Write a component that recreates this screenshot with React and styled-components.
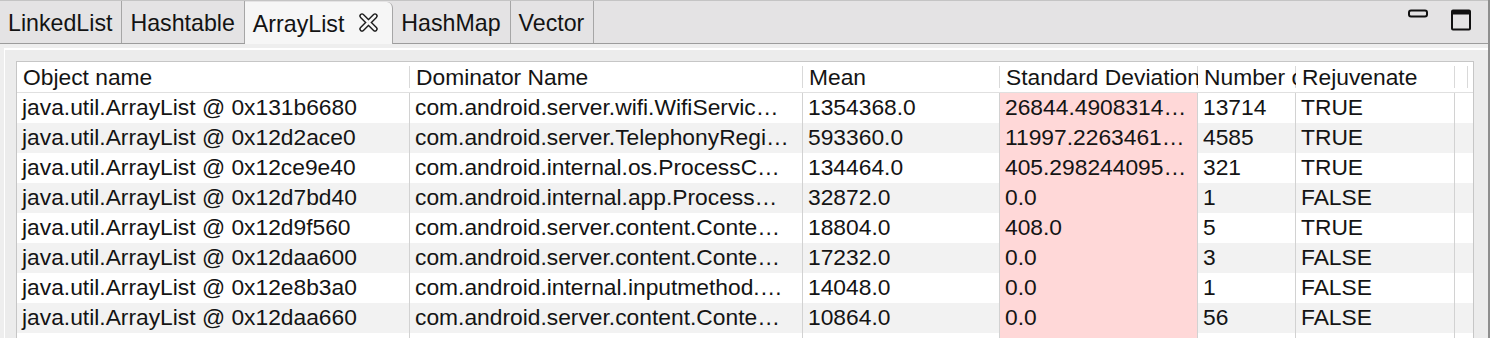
import React from "react"
import styled, { createGlobalStyle } from "styled-components"

const tabs = ["LinkedList", "Hashtable", "ArrayList", "HashMap", "Vector"]

const columns = [
  { title: "Object name", width: 393 },
  { title: "Dominator Name", width: 393 },
  { title: "Mean", width: 197 },
  { title: "Standard Deviation", width: 198, pink: true },
  { title: "Number of Objects", width: 98 },
  { title: "Rejuvenate", width: 159 },
  { title: "", width: 18 },
]

const rows = [
  ["java.util.ArrayList @ 0x131b6680", "com.android.server.wifi.WifiServic…", "1354368.0", "26844.4908314…", "13714", "TRUE"],
  ["java.util.ArrayList @ 0x12d2ace0", "com.android.server.TelephonyRegi…", "593360.0", "11997.2263461…", "4585", "TRUE"],
  ["java.util.ArrayList @ 0x12ce9e40", "com.android.internal.os.ProcessC…", "134464.0", "405.298244095…", "321", "TRUE"],
  ["java.util.ArrayList @ 0x12d7bd40", "com.android.internal.app.Process…", "32872.0", "0.0", "1", "FALSE"],
  ["java.util.ArrayList @ 0x12d9f560", "com.android.server.content.Conte…", "18804.0", "408.0", "5", "TRUE"],
  ["java.util.ArrayList @ 0x12daa600", "com.android.server.content.Conte…", "17232.0", "0.0", "3", "FALSE"],
  ["java.util.ArrayList @ 0x12e8b3a0", "com.android.internal.inputmethod.…", "14048.0", "0.0", "1", "FALSE"],
  ["java.util.ArrayList @ 0x12daa660", "com.android.server.content.Conte…", "10864.0", "0.0", "56", "FALSE"],
  ["java.util.ArrayList @ 0x12d4f6a0", "com.android.server.content.Conte…", "10240.0", "0.0", "32", "FALSE"],
]

const gridCols = columns.map((c) => c.width + "px").join(" ")

function CloseIcon() {
  return (
    <svg width="21" height="21" viewBox="0 0 21 21">
      <path d="M4 4 L17 17 M17 4 L4 17" stroke="#1b1b1b" strokeWidth="5.4" strokeLinecap="round" />
      <path d="M4 4 L17 17 M17 4 L4 17" stroke="#f6f6f6" strokeWidth="2.6" strokeLinecap="round" />
    </svg>
  )
}

function MinimizeIcon() {
  return (
    <svg width="22" height="10" viewBox="0 0 22 10">
      <rect x="2" y="1.5" width="18" height="6" rx="2" fill="none" stroke="#111" strokeWidth="2" />
    </svg>
  )
}

function MaximizeIcon() {
  return (
    <svg width="22" height="22" viewBox="0 0 22 22">
      <rect x="2" y="1.5" width="18" height="19" rx="1" fill="none" stroke="#111" strokeWidth="2" />
      <rect x="2" y="1.5" width="18" height="4" fill="#111" />
    </svg>
  )
}

export default function App() {
  return (
    <>
      <GlobalStyle />
      <View>
        <TabBar>
          {tabs.map((t) => (
            <Tab key={t} active={t === "ArrayList"}>
              {t}
              {t === "ArrayList" && (
                <CloseSlot>
                  <CloseIcon />
                </CloseSlot>
              )}
            </Tab>
          ))}
          <WindowButtons>
            <MinimizeIcon />
            <MaximizeIcon />
          </WindowButtons>
        </TabBar>
        <Content>
          <Frame>
            <Table>
              <HeaderRow>
                {columns.map((c, i) => (
                  <HeaderCell key={i} last={i === columns.length - 1}>
                    {c.title}
                  </HeaderCell>
                ))}
              </HeaderRow>
              {rows.map((r, ri) => (
                <Row key={ri} striped={ri % 2 === 1}>
                  {columns.map((c, ci) => (
                    <Cell key={ci} pink={c.pink}>
                      {r[ci] || ""}
                    </Cell>
                  ))}
                </Row>
              ))}
            </Table>
          </Frame>
        </Content>
      </View>
    </>
  )
}

const GlobalStyle = createGlobalStyle`
  html, body {
    margin: 0;
    padding: 0;
    background: #ffffff;
  }
  body {
    font-family: "Liberation Sans", Arial, sans-serif;
    color: #141414;
  }
`
const View = styled.div`
  width: 1490px;
  height: 338px;
  overflow: hidden;
  box-sizing: border-box;
  border-right: 2px solid #8e8e8e;
  background: #e9e9e9;
  display: flex;
  flex-direction: column;
`
const TabBar = styled.div`
  height: 44px;
  flex: none;
  box-sizing: border-box;
  display: flex;
  align-items: stretch;
  background: #e4e3e4;
  border-top: 1px solid #c4c4c4;
  border-bottom: 1px solid #9c9c9c;
`
const Tab = styled.div`
  display: flex;
  align-items: center;
  padding: 3px ${(p) => (p.active ? "13px" : "9px")} 0 8px;
  font-size: 23.2px;
  color: #131313;
  white-space: nowrap;
  border-right: 1px solid #a6a6a6;
  background: ${(p) => (p.active ? "#f6f6f6" : "transparent")};
  border-top-right-radius: ${(p) => (p.active ? "6px" : "0")};
  margin-bottom: ${(p) => (p.active ? "-1px" : "0")};
  margin-top: ${(p) => (p.active ? "1px" : "0")};
  padding-bottom: ${(p) => (p.active ? "1px" : "0")};
`
const CloseSlot = styled.span`
  display: flex;
  margin-left: 14px;
  margin-top: -4px;
`
const WindowButtons = styled.div`
  margin-left: auto;
  display: flex;
  align-items: flex-start;
  gap: 21px;
  padding: 8px 16px 0 0;
`
const Content = styled.div`
  flex: 1;
  padding: 4px 0 0 4px;
  background: #eeeeee;
`
const Frame = styled.div`
  height: 100%;
  box-sizing: border-box;
  border-top: 2px solid #ffffff;
  border-left: 1px solid #ffffff;
  background: #ececec;
  padding: 11px 14px 0 11px;
`
const Table = styled.div`
  width: fit-content;
  border: 1px solid #c6c6c6;
  border-bottom: none;
  background: #ffffff;
`
const HeaderRow = styled.div`
  display: grid;
  grid-template-columns: ${gridCols};
  height: 31px;
  box-sizing: border-box;
  border-bottom: 1px solid #e0e0e0;
  background: #ffffff;
`
const HeaderCell = styled.div`
  font-size: 22.8px;
  line-height: 30px;
  padding-left: 6px;
  white-space: nowrap;
  overflow: hidden;
  background: ${(p) =>
    p.last
      ? "linear-gradient(#d9d9d9, #d9d9d9) right 5px top 4px / 1px 22px no-repeat"
      : "linear-gradient(#d9d9d9, #d9d9d9) right 0 top 4px / 1px 22px no-repeat"};
`
const Row = styled.div`
  display: grid;
  grid-template-columns: ${gridCols};
  height: 30px;
  background: ${(p) => (p.striped ? "#f2f2f2" : "#ffffff")};
`
const Cell = styled.div`
  font-size: 22.8px;
  line-height: 28px;
  padding-left: 5px;
  white-space: nowrap;
  overflow: hidden;
  border-right: 1px solid #d2d2d2;
  background: ${(p) => (p.pink ? "#ffd8d8" : "transparent")};
  &:last-child {
    border-right: none;
  }
`
